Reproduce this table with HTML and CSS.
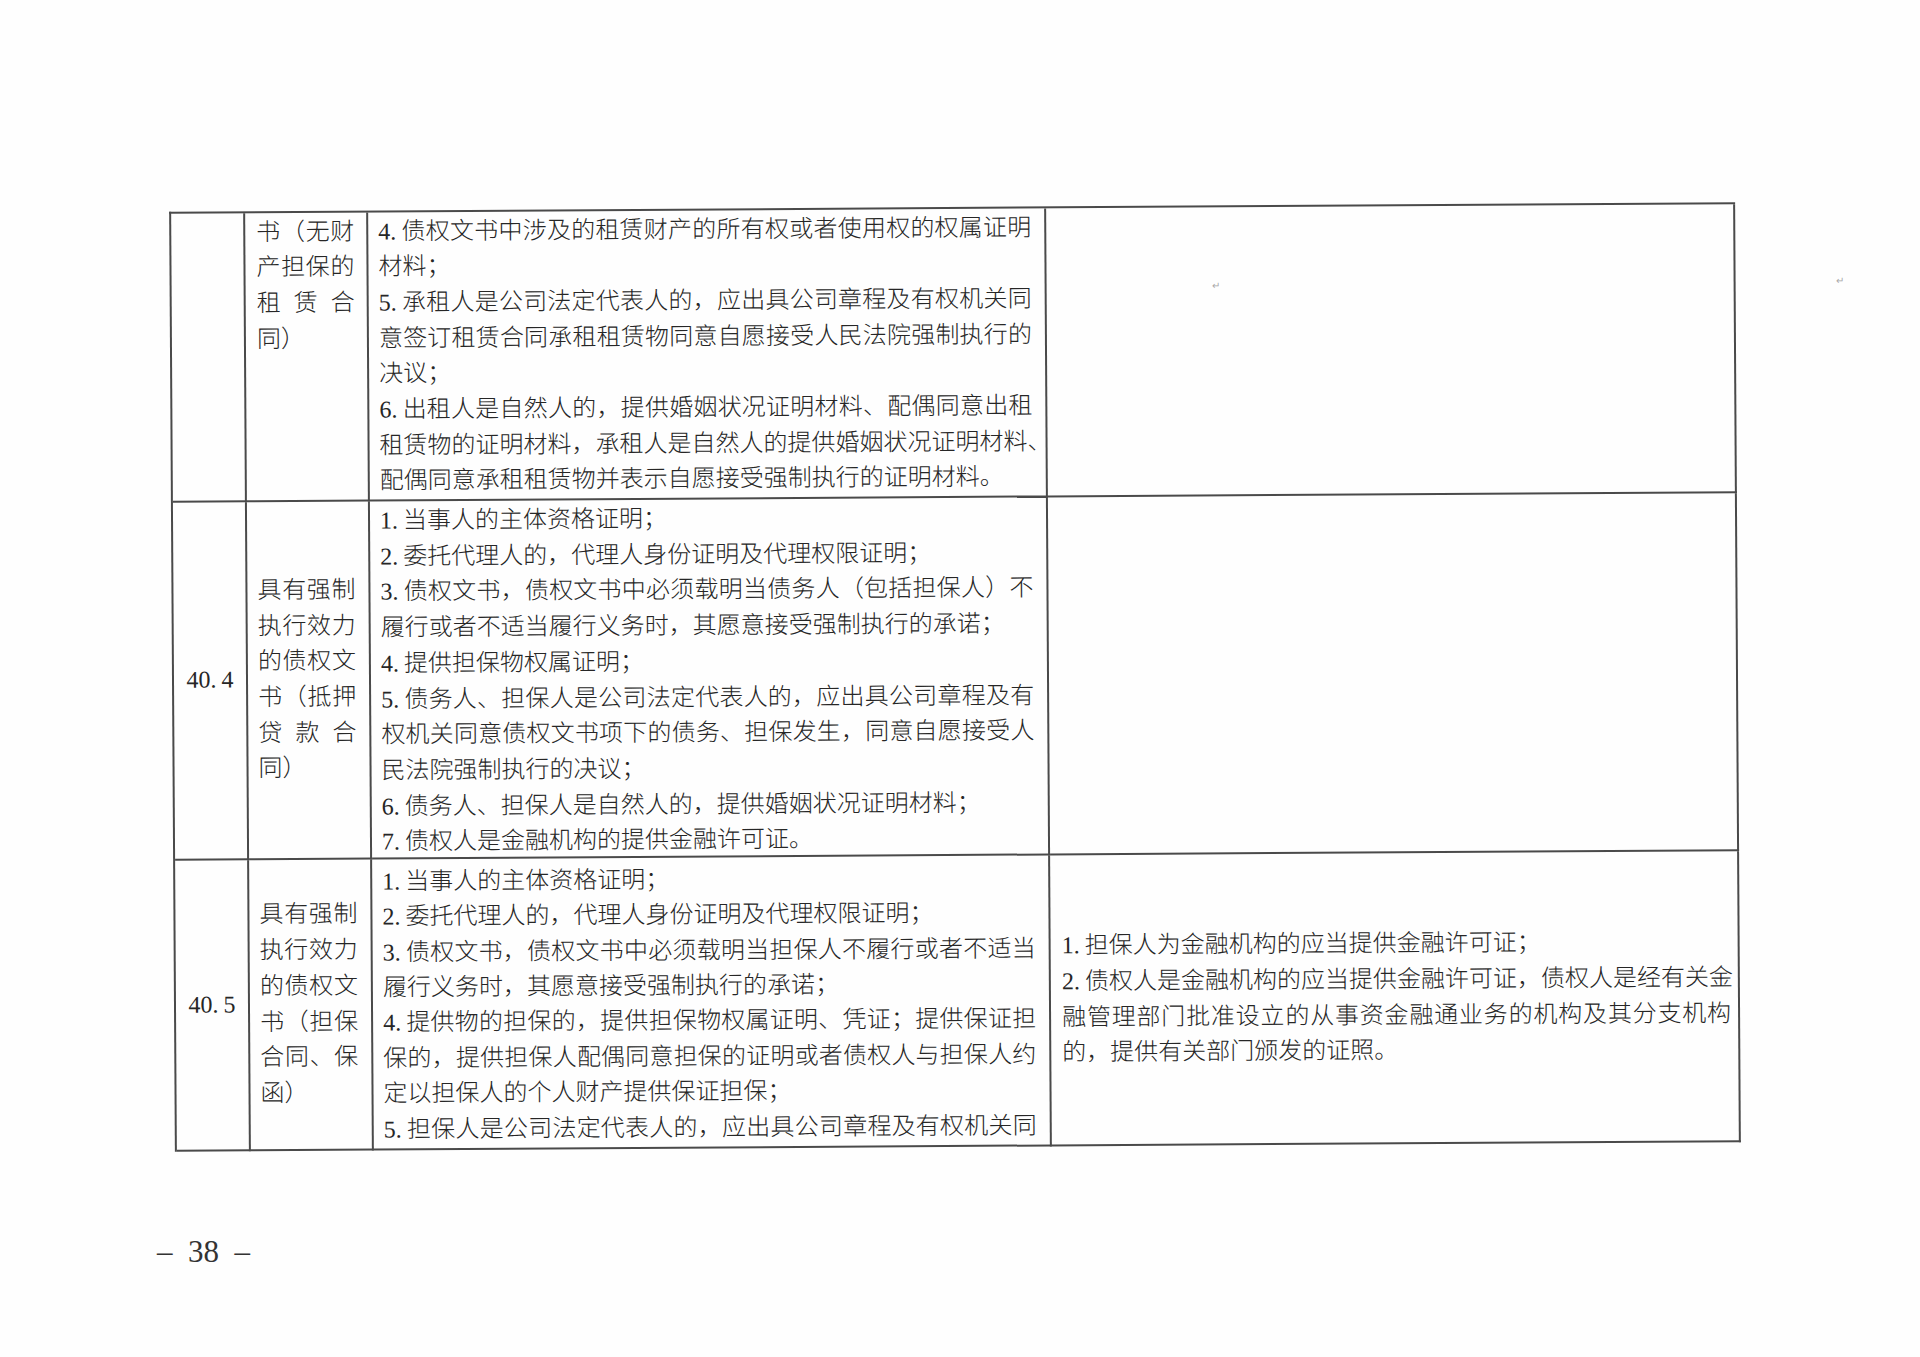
FILE: index.html
```html
<!DOCTYPE html>
<html lang="zh-CN">
<head>
<meta charset="utf-8">
<title>38</title>
<link rel="stylesheet" href="styles.css">
</head>
<body>
<div class="page">
  <div class="tbl">
    <!-- row 1 -->
    <div class="cell c1"></div>
    <div class="cell c2 r1">
      <div class="ln j">书（无财</div>
      <div class="ln j">产担保的</div>
      <div class="ln j">租赁合</div>
      <div class="ln">同）</div>
    </div>
    <div class="cell c3 r1">
      <div class="ln j"><span class="no">4.</span>债权文书中涉及的租赁财产的所有权或者使用权的权属证明</div>
      <div class="ln">材料；</div>
      <div class="ln j"><span class="no">5.</span>承租人是公司法定代表人的，应出具公司章程及有权机关同</div>
      <div class="ln j">意签订租赁合同承租租赁物同意自愿接受人民法院强制执行的</div>
      <div class="ln">决议；</div>
      <div class="ln j"><span class="no">6.</span>出租人是自然人的，提供婚姻状况证明材料、配偶同意出租</div>
      <div class="ln j">租赁物的证明材料，承租人是自然人的提供婚姻状况证明材料、</div>
      <div class="ln">配偶同意承租租赁物并表示自愿接受强制执行的证明材料。</div>
    </div>
    <div class="cell c4"></div>

    <!-- row 2 -->
    <div class="cell c1 mid"><div class="ln num"><span class="no">40.</span>4</div></div>
    <div class="cell c2 mid">
      <div class="ln j">具有强制</div>
      <div class="ln j">执行效力</div>
      <div class="ln j">的债权文</div>
      <div class="ln j">书（抵押</div>
      <div class="ln j">贷款合</div>
      <div class="ln">同）</div>
    </div>
    <div class="cell c3 r2">
      <div class="ln"><span class="no">1.</span>当事人的主体资格证明；</div>
      <div class="ln"><span class="no">2.</span>委托代理人的，代理人身份证明及代理权限证明；</div>
      <div class="ln j"><span class="no">3.</span>债权文书，债权文书中必须载明当债务人（包括担保人）不</div>
      <div class="ln">履行或者不适当履行义务时，其愿意接受强制执行的承诺；</div>
      <div class="ln"><span class="no">4.</span>提供担保物权属证明；</div>
      <div class="ln j"><span class="no">5.</span>债务人、担保人是公司法定代表人的，应出具公司章程及有</div>
      <div class="ln j">权机关同意债权文书项下的债务、担保发生，同意自愿接受人</div>
      <div class="ln">民法院强制执行的决议；</div>
      <div class="ln"><span class="no">6.</span>债务人、担保人是自然人的，提供婚姻状况证明材料；</div>
      <div class="ln"><span class="no">7.</span>债权人是金融机构的提供金融许可证。</div>
    </div>
    <div class="cell c4"></div>

    <!-- row 3 -->
    <div class="cell c1 mid"><div class="ln num"><span class="no">40.</span>5</div></div>
    <div class="cell c2 mid">
      <div class="ln j">具有强制</div>
      <div class="ln j">执行效力</div>
      <div class="ln j">的债权文</div>
      <div class="ln j">书（担保</div>
      <div class="ln j">合同、保</div>
      <div class="ln">函）</div>
    </div>
    <div class="cell c3 r3">
      <div class="ln"><span class="no">1.</span>当事人的主体资格证明；</div>
      <div class="ln"><span class="no">2.</span>委托代理人的，代理人身份证明及代理权限证明；</div>
      <div class="ln j"><span class="no">3.</span>债权文书，债权文书中必须载明当担保人不履行或者不适当</div>
      <div class="ln">履行义务时，其愿意接受强制执行的承诺；</div>
      <div class="ln j"><span class="no">4.</span>提供物的担保的，提供担保物权属证明、凭证；提供保证担</div>
      <div class="ln j">保的，提供担保人配偶同意担保的证明或者债权人与担保人约</div>
      <div class="ln">定以担保人的个人财产提供保证担保；</div>
      <div class="ln j"><span class="no">5.</span>担保人是公司法定代表人的，应出具公司章程及有权机关同</div>
    </div>
    <div class="cell c4 mid">
      <div class="ln"><span class="no">1.</span>担保人为金融机构的应当提供金融许可证；</div>
      <div class="ln j"><span class="no">2.</span>债权人是金融机构的应当提供金融许可证，债权人是经有关金</div>
      <div class="ln j">融管理部门批准设立的从事资金融通业务的机构及其分支机构</div>
      <div class="ln">的，提供有关部门颁发的证照。</div>
    </div>
  </div>

  <div class="folio">–&nbsp;&nbsp;38&nbsp;&nbsp;–</div>

  <span class="mark mark-a">↵</span>
  <span class="mark mark-b">↵</span>
</div>
</body>
</html>
```

FILE: styles.css
```css
html, body {
  margin: 0;
  padding: 0;
  background: #ffffff;
}

.page {
  position: relative;
  width: 1920px;
  height: 1357px;
  box-sizing: border-box;
  padding: 207px 0 0 172px;
  background: #fefefe;
  color: #262626;
  font-family: "Liberation Serif", "Noto Sans CJK SC", serif;
  font-size: 24px;
  font-weight: 300;
}

/* the scanned page is slightly skewed */
.tbl {
  display: grid;
  grid-template-columns: 74px 123px 678px 689px;
  grid-template-rows: 289px 358px 291px;
  width: max-content;
  border-top: 2px solid #4a4a4a;
  border-left: 2px solid #4a4a4a;
  transform: rotate(-0.35deg);
  transform-origin: 50% 50%;
}

.cell {
  box-sizing: border-box;
  border-right: 2px solid #4a4a4a;
  border-bottom: 2px solid #4a4a4a;
  min-width: 0;
}

.ln {
  line-height: 35.7px;
  white-space: nowrap;
}

.ln.j {
  text-align: justify;
  text-align-last: justify;
}

.no {
  padding-right: 5px;
}

.num {
  text-align: center;
}

.mid {
  display: flex;
  flex-direction: column;
  justify-content: center;
}

.c2 {
  padding-left: 10px;
  padding-right: 13px;
}

.c2.r1 {
  padding-left: 11px;
  padding-right: 12px;
}

.c3 {
  padding-left: 10px;
  padding-right: 13px;
}

.r1 {
  padding-top: 1.5px;
}

.c3.r2 {
  padding-top: 2px;
}

.c3.r3 {
  padding-top: 4.7px;
}

.c3.r3 .ln {
  line-height: 35.4px;
}

.c4 {
  padding-left: 11px;
  padding-right: 7px;
}

.folio {
  margin-top: 89px;
  margin-left: -15px;
  font-family: "Liberation Serif", serif;
  font-size: 31px;
  line-height: 31px;
  font-weight: 400;
  color: #333333;
}

.mark {
  position: absolute;
  font-family: "DejaVu Sans", sans-serif;
  font-size: 10px;
  line-height: 10px;
  color: #a8a8a8;
}

.mark-a {
  left: 1212px;
  top: 281px;
}

.mark-b {
  left: 1836px;
  top: 276px;
}
```
